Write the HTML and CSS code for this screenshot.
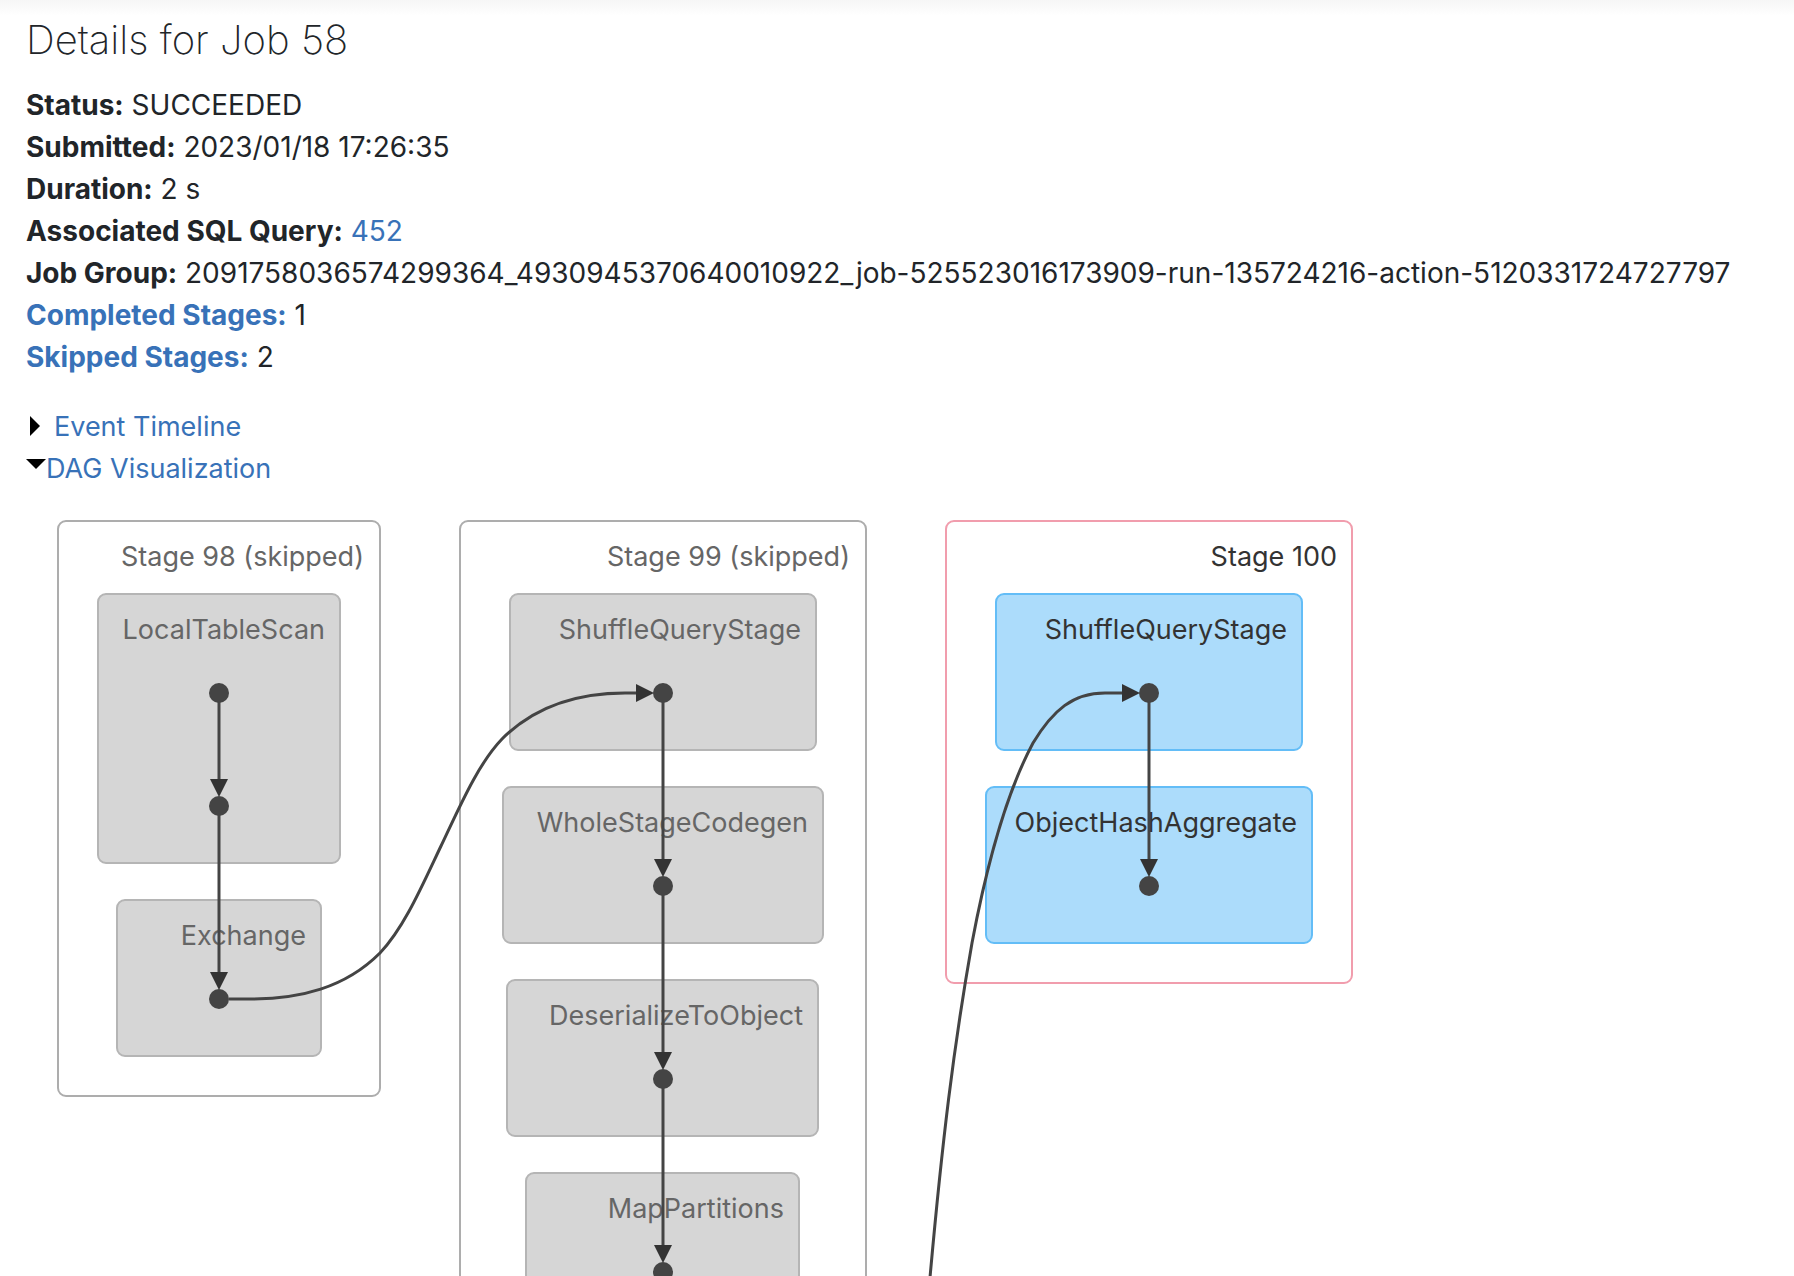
FILE: index.html
```html
<!DOCTYPE html>
<html lang="en">
<head>
<meta charset="utf-8">
<title>Details for Job 58</title>
<link rel="stylesheet" href="styles.css">
</head>
<body>
<main class="page">
  <h1 class="title">Details for Job 58</h1>
  <ul class="summary">
    <li><strong>Status:</strong> SUCCEEDED</li>
    <li><strong>Submitted:</strong> 2023/01/18 17:26:35</li>
    <li><strong>Duration:</strong> 2 s</li>
    <li><strong>Associated SQL Query:</strong> <a href="#sql">452</a></li>
    <li><strong>Job Group:</strong> 2091758036574299364_4930945370640010922_job-525523016173909-run-135724216-action-5120331724727797</li>
    <li><a href="#completed"><strong>Completed Stages:</strong></a> 1</li>
    <li><a href="#skipped"><strong>Skipped Stages:</strong></a> 2</li>
  </ul>
  <div class="toggle"><span class="arrow-closed"></span><a href="#timeline">Event Timeline</a></div>
  <div class="toggle"><span class="arrow-open"></span><a href="#dag">DAG Visualization</a></div>
  <div class="dag" id="dag">
    <svg width="1400" height="900" viewBox="26 490 1400 900">
      <defs>
        <marker id="arrow" viewBox="0 0 18 18" refX="0" refY="9" markerWidth="18" markerHeight="18" markerUnits="userSpaceOnUse" orient="auto">
          <path class="arrowhead" d="M0 0L18 9L0 18z"/>
        </marker>
      </defs>

      <g class="skipped">
        <rect class="stage" x="58" y="521" width="322" height="575" rx="8"/>
        <text x="364" y="566">Stage 98 (skipped)</text>
        <rect class="op" x="98" y="594" width="242" height="269" rx="8"/>
        <text x="325" y="639">LocalTableScan</text>
        <rect class="op" x="117" y="900" width="204" height="156" rx="8"/>
        <text x="306" y="945">Exchange</text>
      </g>

      <g class="skipped">
        <rect class="stage" x="460" y="521" width="406" height="1000" rx="8"/>
        <text x="850" y="566">Stage 99 (skipped)</text>
        <rect class="op" x="510" y="594" width="306" height="156" rx="8"/>
        <text x="801" y="639">ShuffleQueryStage</text>
        <rect class="op" x="503" y="787" width="320" height="156" rx="8"/>
        <text x="808" y="832">WholeStageCodegen</text>
        <rect class="op" x="507" y="980" width="311" height="156" rx="8"/>
        <text x="803" y="1025">DeserializeToObject</text>
        <rect class="op" x="526" y="1173" width="273" height="156" rx="8"/>
        <text x="784" y="1218">MapPartitions</text>
      </g>

      <g class="active">
        <rect class="stage" x="946" y="521" width="406" height="462" rx="8"/>
        <text x="1337" y="566">Stage 100</text>
        <rect class="op" x="996" y="594" width="306" height="156" rx="8"/>
        <text x="1287" y="639">ShuffleQueryStage</text>
        <rect class="op" x="986" y="787" width="326" height="156" rx="8"/>
        <text x="1297" y="832">ObjectHashAggregate</text>
      </g>

      <g class="edges">
        <path d="M219 693V779"/>
        <path d="M219 806V972"/>
        <path d="M229 999H250C300 999 345 988 380 953C404 928 422 886 441 846C460 806 478 764 502 739C537 704 582 693 625 693H636"/>
        <path d="M663 693V859"/>
        <path d="M663 886V1052"/>
        <path d="M663 1079V1245"/>
        <path d="M928 1300C942 1140 954 1045 972 943C985 874 1003 799 1033 743C1053 710 1073 693 1105 693H1122"/>
        <path d="M1149 693V859"/>
      </g>

      <g class="nodes">
        <circle cx="219" cy="693" r="10"/>
        <circle cx="219" cy="806" r="10"/>
        <circle cx="219" cy="999" r="10"/>
        <circle cx="663" cy="693" r="10"/>
        <circle cx="663" cy="886" r="10"/>
        <circle cx="663" cy="1079" r="10"/>
        <circle cx="663" cy="1272" r="10"/>
        <circle cx="1149" cy="693" r="10"/>
        <circle cx="1149" cy="886" r="10"/>
      </g>
    </svg>
  </div>
</main>
</body>
</html>
```
FILE: styles.css
```css
* {
  box-sizing: border-box;
}

body {
  margin: 0;
  font-family: Inter, "Liberation Sans", sans-serif;
  font-size: 27px;
  line-height: 42px;
  color: #212529;
  background: #fff linear-gradient(#f6f6f6, #fff) no-repeat 0 0 / 100% 16px;
}

.page {
  display: flex;
  flex-direction: column;
  height: 100vh;
  padding: 16px 26px 0;
}

.title {
  margin: 0 0 20px;
  font-size: 40px;
  font-weight: 200;
  line-height: 48px;
}

.summary {
  margin: 0 0 28px;
  padding: 0;
  font-size: 28px;
  list-style: none;
}

strong {
  font-weight: 700;
}

a {
  color: #3872b8;
  text-decoration: none;
}

.toggle {
  display: flex;
}

.arrow-closed {
  width: 10px;
  margin: 10px 14px 0 4px;
  border-left: 10px solid #000;
  border-top: 10px solid transparent;
  border-bottom: 10px solid transparent;
  align-self: flex-start;
}

.arrow-open {
  margin-top: 11px;
  border-top: 10px solid #000;
  border-left: 10px solid transparent;
  border-right: 10px solid transparent;
  align-self: flex-start;
}

.dag {
  flex: 1;
  min-height: 0;
  overflow: hidden;
}

.dag svg {
  display: block;
}

.dag text {
  text-anchor: end;
}

.stage {
  fill: #fff;
  stroke-width: 2;
}

.op {
  stroke-width: 2;
}

.skipped .stage {
  stroke: #adadad;
}

.skipped .op {
  fill: #d6d6d6;
  stroke: #b5b5b5;
}

.skipped text {
  fill: #666;
}

.active .stage {
  stroke: #f19dad;
}

.active .op {
  fill: #acdcfb;
  stroke: #63bdf7;
}

.active text {
  fill: #333;
}

.edges path {
  fill: none;
  stroke: #444;
  stroke-width: 3;
  marker-end: url(#arrow);
}

.arrowhead {
  fill: #333;
}

.nodes {
  fill: #444;
}
```
